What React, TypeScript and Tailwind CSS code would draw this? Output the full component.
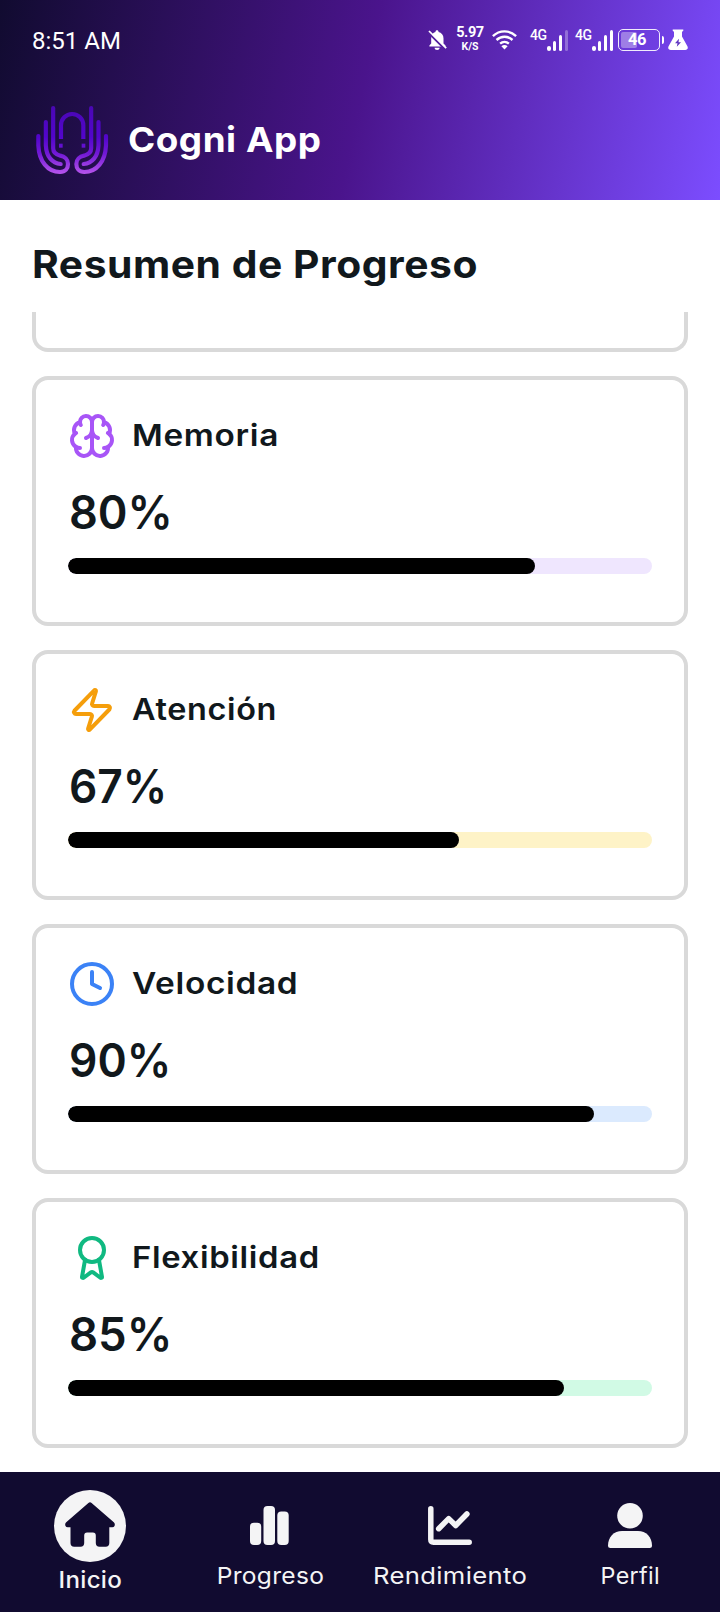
import React from "react";
import { Award, Clock, Zap } from "lucide-react";

function Brain() {
  return (
    <svg width="48" height="48" viewBox="0 0 24 24" fill="none" stroke="#a855f7" strokeWidth="2" strokeLinecap="round" strokeLinejoin="round">
      <path d="M12 5a3 3 0 1 0-5.997.125 4 4 0 0 0-2.526 5.77 4 4 0 0 0 .556 6.588A4 4 0 1 0 12 18Z" />
      <path d="M12 5a3 3 0 1 1 5.997.125 4 4 0 0 1 2.526 5.77 4 4 0 0 1-.556 6.588A4 4 0 1 1 12 18Z" />
      <path d="M15 13a4.5 4.5 0 0 1-3-4 4.5 4.5 0 0 1-3 4" />
      <path d="M17.599 6.5a3 3 0 0 0 .399-1.375" />
      <path d="M6.003 5.125A3 3 0 0 0 6.401 6.5" />
      <path d="M3.477 10.896a4 4 0 0 1 .585-.396" />
      <path d="M19.938 10.5a4 4 0 0 1 .585.396" />
      <path d="M6 18a4 4 0 0 1-1.967-.516" />
      <path d="M19.967 17.484A4 4 0 0 1 18 18" />
    </svg>
  );
}

function Logo() {
  const half = (
    <>
      <path d="M115 408V436C117 484 143 516 180 516C196 516 204 505 204 492C204 478 194 469 181 467C168 464 159.500 458 159.500 445V324" />
      <path d="M137.500 366V436C139 470 157 490 182 492" />
    </>
  );
  return (
    <svg width="80" height="80" viewBox="96 300 240 240" fill="none">
      <defs>
        <linearGradient id="logo" gradientUnits="userSpaceOnUse" x1="0" y1="320" x2="0" y2="522">
          <stop offset="0" stopColor="#4a07b4" />
          <stop offset="0.45" stopColor="#5205cc" />
          <stop offset="0.7" stopColor="#7219d6" />
          <stop offset="1" stopColor="#b755ec" />
        </linearGradient>
      </defs>
      <g stroke="url(#logo)" strokeWidth="12.500" strokeLinecap="round" strokeLinejoin="round">
        {half}
        <g transform="matrix(-1 0 0 1 433 0)">{half}</g>
        <path d="M183 417V376A33.500 34 0 0 1 250 376V417" strokeLinecap="butt" />
      </g>
      <g fill="url(#logo)">
        <rect x="177" y="431" width="11" height="12" />
        <rect x="245" y="431" width="11" height="12" />
      </g>
    </svg>
  );
}

function Signal({ weak = false }: { weak?: boolean }) {
  return (
    <div className="relative flex h-[22px] w-[38px] items-end justify-end gap-[2.6px]">
      <span className="absolute left-0 -top-px text-[14px] font-medium leading-[14px] tracking-[-0.4px]">4G</span>
      <i className="h-[5px] w-[3.2px] rounded-full bg-white" />
      <i className="h-[10.500px] w-[3.2px] rounded-full bg-white" />
      <i className="h-[16px] w-[3.2px] rounded-full bg-white" />
      <i className={weak ? "h-[21.500px] w-[3.2px] rounded-full bg-white/30" : "h-[21.500px] w-[3.2px] rounded-full bg-white"} />
    </div>
  );
}

function StatusBar() {
  return (
    <div className="flex h-20 items-center px-8 font-['Roboto',sans-serif]">
      <span className="pt-[2px] text-[24px] leading-8">8:51 AM</span>
      <div className="ml-auto flex h-[22px] items-center">
        <svg width="19" height="22" viewBox="0 0 19 22">
          <path fill="#fff" d="M9 1.200c.900 0 1.500.6 1.500 1.300v.6c3 .7 5 3.200 5 6.300v5.100l2 2.100v1H1.400v-1l1.800-2.100V9.400c0-3.100 1.600-5.600 4.300-6.300v-.6c0-.7.6-1.300 1.500-1.300zM6.600 18.800h5c0 1.300-1.100 2.300-2.500 2.300s-2.500-1-2.500-2.300z" />
          <path d="M-0.500 2.800L17 20.300" stroke="#54209f" strokeWidth="2" />
          <path d="M1 2L18.200 19.200" stroke="#fff" strokeWidth="1.700" />
        </svg>
        <div className="-mt-[3px] ml-[9px] flex w-7 flex-col items-center font-bold">
          <span className="text-[14.500px] leading-[16px] tracking-[-0.4px]">5.97</span>
          <span className="text-[10.500px] leading-[11px]">K/S</span>
        </div>
        <svg className="ml-2" width="25" height="22" viewBox="0 0 25 22" fill="none" stroke="#fff" strokeWidth="2.400">
          <path d="M.9 7.200C7.500.8 17.500.8 24.100 7.200" />
          <path d="M4.500 11C9.200 6.600 15.800 6.600 20.500 11" />
          <path d="M8.100 14.700C10.700 12.500 14.300 12.500 16.900 14.700" />
          <path d="M12.500 20.500L9.400 17.300C11.200 15.700 13.800 15.700 15.600 17.300Z" fill="#fff" stroke="none" />
        </svg>
        <div className="ml-[13px]"><Signal weak /></div>
        <div className="ml-[7px]"><Signal /></div>
        <div className="ml-[5px] flex items-center gap-[1.500px]">
          <div className="relative h-[22px] w-[42px] rounded-[5px] border-[1.500px] border-white/90 p-[2px]">
            <div className="h-full w-4 rounded-[2px] bg-white/35" />
            <span className="absolute inset-0 pr-1 text-center text-[16.500px] font-bold leading-[20px] tracking-[-0.4px]">46</span>
          </div>
          <i className="h-2 w-[2.500px] rounded-r-full bg-white" />
        </div>
        <svg className="ml-1" width="20" height="22" viewBox="0 0 20 22">
          <path fill="#fff" d="M5 .4h10c.5 0 .6.600.3 1L14 3v4.500l5.400 9.800c1 2-.1 3.700-2.200 3.700H2.800C.7 21-.4 19.300.6 17.300L6 7.500V3L4.700 1.400C4.400 1 4.500.4 5 .4z" />
          <path fill="#5e35c0" d="M11 9.800L7 14.200h2.500l-.7 3.500 4.200-4.500h-2.500z" />
        </svg>
      </div>
    </div>
  );
}

type Metric = {
  label: string;
  labelScale: string;
  value: number;
  valueScale: string;
  track: string;
  icon: React.ReactNode;
};

const metrics: Metric[] = [
  { label: "Memoria", labelScale: "scale-x-[1.112]", value: 80, valueScale: "scale-x-[0.98]", track: "bg-[#efe6fe]", icon: <Brain /> },
  { label: "Atención", labelScale: "scale-x-[1.081]", value: 67, valueScale: "scale-x-[0.963]", track: "bg-[#fef3c7]", icon: <Zap size={48} color="#f59e0b" /> },
  { label: "Velocidad", labelScale: "scale-x-[1.114]", value: 90, valueScale: "scale-x-[0.965]", track: "bg-[#dbeafe]", icon: <Clock size={48} color="#3b82f6" /> },
  { label: "Flexibilidad", labelScale: "scale-x-[1.094]", value: 85, valueScale: "scale-x-[0.989]", track: "bg-[#d1fae5]", icon: <Award size={48} color="#10b981" /> },
];

function MetricCard({ label, labelScale, value, valueScale, track, icon }: Metric) {
  return (
    <section className="h-[250px] shrink-0 rounded-2xl border-4 border-[#d9d9d9] bg-white p-8">
      <div className="flex h-12 items-center gap-4">
        {icon}
        <h2 className={`mb-0.5 origin-left text-[30px] font-semibold leading-[46px] tracking-[0.6px] ${labelScale}`}>{label}</h2>
      </div>
      <p className={`ml-px mt-[17px] w-max origin-left text-[46px] font-semibold leading-[70px] ${valueScale}`}>{value}%</p>
      <div className={`mt-[11px] h-4 overflow-hidden rounded-full ${track}`}>
        <div className="h-full rounded-full bg-black" style={{ width: `${value}%` }} />
      </div>
    </section>
  );
}

function HomeIcon() {
  return (
    <svg width="72" height="72" viewBox="0 0 72 72">
      <circle cx="36" cy="36" r="36" fill="#f4f4f5" />
      <path
        fill="#110b30"
        d="M34.400 12.900Q36 11.700 37.600 12.900L59.800 32.300Q61.400 34 60.500 36Q59.800 37.300 58.300 37.300H55.300V53Q55.300 56.700 51.600 56.700H45.500Q41.800 56.700 41.800 53V45.500Q41.800 42.600 38.900 42.600H33.100Q30.200 42.600 30.200 45.500V53Q30.200 56.700 26.500 56.700H20.200Q16.500 56.700 16.500 53V37.300H13.700Q12.200 37.300 11.500 36Q10.600 34 12.200 32.300Z"
      />
    </svg>
  );
}

function BarsIcon() {
  return (
    <svg width="48" height="48" viewBox="0 0 48 48" fill="#f4f4f5">
      <rect x="4" y="20.700" width="11.200" height="22.300" rx="4" />
      <rect x="17.500" y="4" width="11.500" height="39" rx="4" />
      <rect x="31.300" y="9.500" width="11.400" height="33.500" rx="4" />
    </svg>
  );
}

function TrendIcon() {
  return (
    <svg width="48" height="48" viewBox="0 0 48 48" fill="none" stroke="#f4f4f5" strokeWidth="5.500" strokeLinecap="round" strokeLinejoin="round">
      <path d="M4.800 6.800V37.600Q4.800 40.300 7.500 40.300H43.200" />
      <path d="M12.700 26.700L22.700 16.600L29.700 23.500L40.900 12" />
    </svg>
  );
}

function PersonIcon() {
  return (
    <svg width="48" height="48" viewBox="0 0 48 48" fill="#f4f4f5">
      <circle cx="24" cy="13.700" r="12.800" />
      <path d="M16 29H32C40 29 46 35 46 43.500Q46 46 43.500 46H4.500Q2 46 2 43.500C2 35 8 29 16 29Z" />
    </svg>
  );
}

const tabs = [
  { label: "Progreso", scale: "scale-x-[1.066]", icon: <BarsIcon /> },
  { label: "Rendimiento", scale: "scale-x-[1.115]", icon: <TrendIcon /> },
  { label: "Perfil", scale: "scale-x-[1.013]", icon: <PersonIcon /> },
];

export default function App() {
  return (
    <div className="flex h-[1612px] w-[720px] flex-col overflow-hidden bg-white font-['Inter',sans-serif] text-[#11181c]">
      <header className="h-[200px] shrink-0 bg-[linear-gradient(102deg,#110b30_0%,#4a148c_50%,#7c4dff_100%)] text-white">
        <StatusBar />
        <div className="flex h-[120px] items-center gap-4 px-8">
          <Logo />
          <span className="origin-left scale-x-[1.067] text-[34.500px] font-bold leading-[54px] tracking-[0.5px]">Cogni App</span>
        </div>
      </header>
      <main className="flex min-h-0 flex-1 flex-col px-8">
        <div className="h-28 shrink-0 pt-9">
          <h1 className="w-max origin-left scale-x-[1.06] text-[38.500px] font-bold leading-[56px] tracking-[0.5px]">Resumen de Progreso</h1>
        </div>
        <div className="flex min-h-0 flex-1 flex-col gap-6 overflow-hidden">
          <section className="h-10 shrink-0 rounded-b-2xl border-4 border-t-0 border-[#d9d9d9]" />
          {metrics.map((m) => (
            <MetricCard key={m.label} {...m} />
          ))}
        </div>
      </main>
      <nav className="grid h-[140px] shrink-0 grid-cols-4 bg-[#110b30] text-[23px] leading-[35px] tracking-[0.3px] text-[#f4f4f5]">
        <a className="flex flex-col items-center pt-[18px] font-medium">
          <HomeIcon />
          <span className="scale-x-[1.048] pt-px">Inicio</span>
        </a>
        {tabs.map((t) => (
          <a key={t.label} className="flex flex-col items-center gap-[9px] pt-[30px]">
            {t.icon}
            <span className={t.scale}>{t.label}</span>
          </a>
        ))}
      </nav>
    </div>
  );
}
